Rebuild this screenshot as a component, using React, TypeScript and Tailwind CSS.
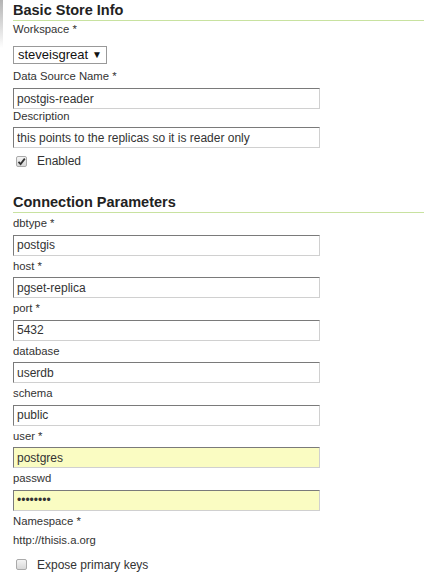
import React from "react";

const font = { fontFamily: '"Liberation Sans", Arial, sans-serif' };

function SectionTitle({ children }: { children: React.ReactNode }) {
    return (
        <h2 className="h-[21px] border-b border-[#c8e2a0] text-[14.5px] font-bold leading-[20px] text-[#222]">
            {children}
        </h2>
    );
}

function TextBox({ value, yellow, password }: { value: string; yellow?: boolean; password?: boolean }) {
    return (
        <input
            readOnly
            type={password ? "password" : "text"}
            value={value}
            className={
                "block h-[21px] w-[307px] border border-t-[#7a7a7a] border-l-[#7a7a7a] border-r-[#d0d0d0] border-b-[#d0d0d0] px-[3px] text-[12px] text-[#333] outline-none " +
                (yellow ? "bg-[#fafcc2]" : "bg-white")
            }
            style={font}
        />
    );
}

function Field({ label, value, yellow, password }: { label: string; value: string; yellow?: boolean; password?: boolean }) {
    return (
        <div>
            <div className="h-[21.5px] text-[11.3px] leading-[21.5px] text-[#333]">{label}</div>
            <TextBox value={value} yellow={yellow} password={password} />
        </div>
    );
}

function Check({ checked, label }: { checked?: boolean; label: string }) {
    return (
        <label className="flex h-[18px] w-fit items-center gap-[10px] pl-[3px] text-[12px] leading-[18px] text-[#333]">
            <span className="flex h-[11px] w-[11px] items-center justify-center rounded-[2px] border border-[#aaa] bg-gradient-to-b from-[#f4f4f4] to-[#d8d8d8]">
                {checked && (
                    <svg width="9" height="9" viewBox="0 0 9 9">
                        <path d="M1.5 4.8 L3.6 7 L7.8 1.6" fill="none" stroke="#333" strokeWidth="1.8" />
                    </svg>
                )}
            </span>
            {label}
        </label>
    );
}

export default function App() {
    return (
        <div className="flex min-h-[579px] w-[424px] bg-white" style={font}>
            {/* left edge shadow of the sidebar */}
            <div className="h-[48px] w-[3px] shrink-0 bg-gradient-to-b from-[#b4b4b4] to-white" />

            <div className="flex-1 pl-[10px]">
                <SectionTitle>Basic Store Info</SectionTitle>
                <div className="h-[16px] text-[11.3px] leading-[16px] text-[#333]">Workspace *</div>
                <div className="mt-[9px] flex h-[18px] w-fit items-center gap-[4px] border border-[#999] px-[4px] text-[13px] leading-[16px] text-[#111]">
                    steveisgreat
                    <span className="text-[10px]">▼</span>
                </div>
                <div className="h-[24px] text-[11.3px] leading-[24px] text-[#333]">Data Source Name *</div>
                <TextBox value="postgis-reader" />
                <div className="h-[18px] text-[11.3px] leading-[14px] text-[#333]">Description</div>
                <TextBox value="this points to the replicas so it is reader only" />
                <div className="mt-[4px]">
                    <Check checked label="Enabled" />
                </div>

                <div className="mt-[22px]">
                    <SectionTitle>Connection Parameters</SectionTitle>
                </div>
                <Field label="dbtype *" value="postgis" />
                <Field label="host *" value="pgset-replica" />
                <Field label="port *" value="5432" />
                <Field label="database" value="userdb" />
                <Field label="schema" value="public" />
                <Field label="user *" value="postgres" yellow />
                <Field label="passwd" value="postgres" yellow password />
                <div className="h-[21px] text-[11.3px] leading-[21px] text-[#333]">Namespace *</div>
                <div className="h-[16px] text-[11.3px] leading-[16px] text-[#333]">http://thisis.a.org</div>
                <div className="mt-[8px]">
                    <Check label="Expose primary keys" />
                </div>
            </div>
        </div>
    );
}
